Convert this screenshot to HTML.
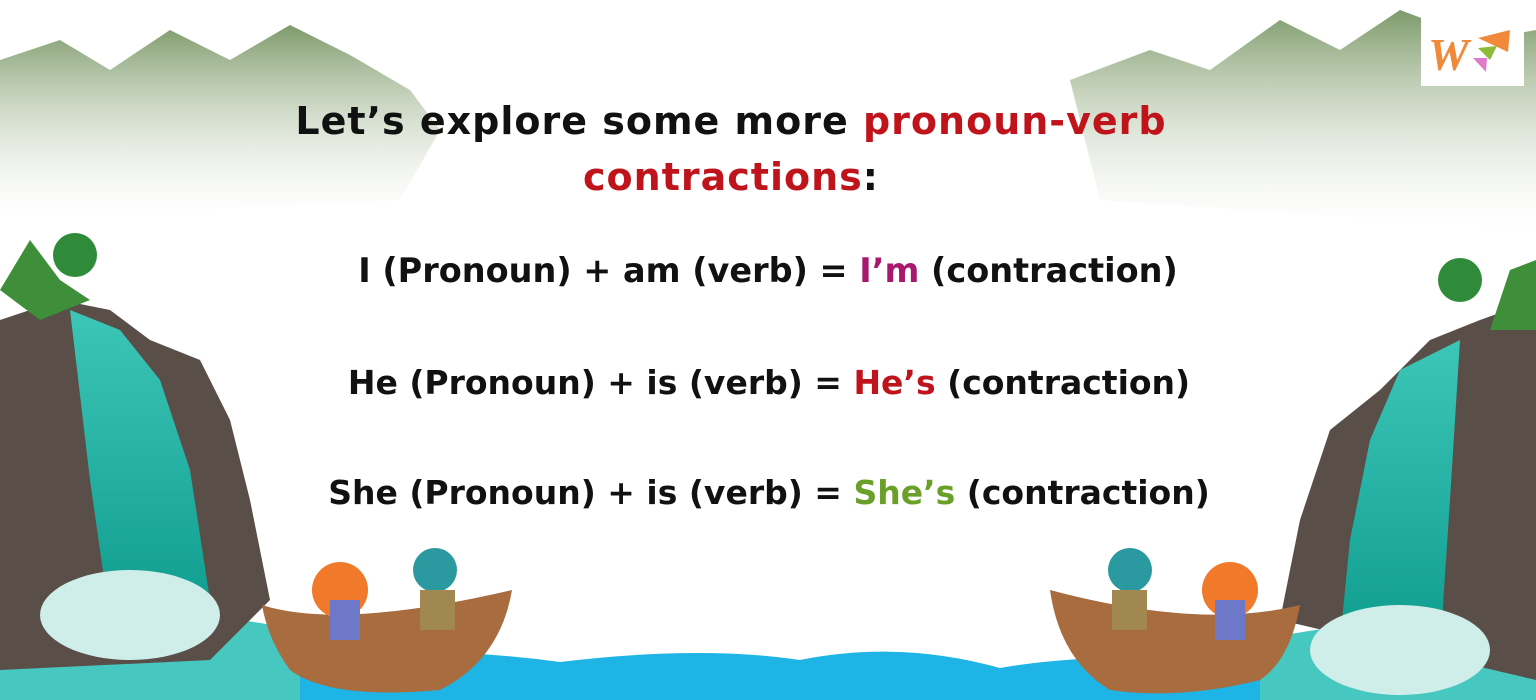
<!DOCTYPE html>
<html><head><meta charset="utf-8"><style>
html,body{margin:0;padding:0}
body{width:1536px;height:700px;position:relative;overflow:hidden;background:#fff;font-family:"DejaVu Sans","Liberation Sans",sans-serif;font-weight:bold}
svg{position:absolute;left:0;top:0}
.t{position:absolute;left:0;width:1536px;text-align:center;color:#111;white-space:nowrap}
.h{font-size:38px;letter-spacing:1px;left:-37px}
.l{font-size:33.5px}
.r{color:#c0141c}.m{color:#a8186e}.g{color:#6aa02a}
</style></head><body>
<svg width="1536" height="700" viewBox="0 0 1536 700">
<defs>
<linearGradient id="mt" x1="0" y1="0" x2="0" y2="1"><stop offset="0" stop-color="#7d9a6a"/><stop offset="1" stop-color="#e6ebe0" stop-opacity="0"/></linearGradient>
<linearGradient id="wf" x1="0" y1="0" x2="0" y2="1"><stop offset="0" stop-color="#3cc6b8"/><stop offset="1" stop-color="#0e9c8e"/></linearGradient>
</defs>
<path d="M0 60 L60 40 L110 70 L170 30 L230 60 L290 25 L350 55 L410 90 L440 130 L400 200 L0 220Z" fill="url(#mt)"/>
<path d="M1070 80 L1150 50 L1210 70 L1280 20 L1340 50 L1400 10 L1480 40 L1536 30 L1536 230 L1100 200Z" fill="url(#mt)"/>
<path d="M220 665 Q400 640 560 662 Q700 645 800 660 Q900 640 1000 668 Q1100 650 1300 660 L1300 700 L220 700Z" fill="#1eb4e6"/>
<path d="M0 620 Q150 600 300 630 L300 700 L0 700Z" fill="#46c8c0"/>
<path d="M1260 640 Q1400 610 1536 630 L1536 700 L1260 700Z" fill="#46c8c0"/>
<path d="M0 320 L60 300 L110 310 L150 340 L200 360 L230 420 L250 500 L270 600 L210 660 L0 670Z" fill="#5a4e48"/>
<path d="M70 310 L120 330 L160 380 L190 470 L210 600 L110 620 L90 480Z" fill="url(#wf)"/>
<ellipse cx="130" cy="615" rx="90" ry="45" fill="#cfeee9"/>
<path d="M0 290 L30 240 L60 280 L90 300 L40 320Z" fill="#3f8e3a"/>
<circle cx="75" cy="255" r="22" fill="#2f8a3a"/>
<path d="M1536 300 L1480 320 L1430 340 L1380 390 L1330 430 L1300 520 L1280 620 L1536 680Z" fill="#5a4e48"/>
<path d="M1460 340 L1400 370 L1370 440 L1350 540 L1340 640 L1440 650 L1450 500Z" fill="url(#wf)"/>
<ellipse cx="1400" cy="650" rx="90" ry="45" fill="#cfeee9"/>
<circle cx="1460" cy="280" r="22" fill="#2f8a3a"/>
<path d="M1490 330 L1510 270 L1536 260 L1536 330Z" fill="#3f8e3a"/>
<path d="M262 605 Q340 630 512 590 Q500 660 440 690 Q330 700 290 670 Q268 640 262 605Z" fill="#a86c3e"/>
<path d="M1050 590 Q1200 630 1300 605 Q1290 660 1260 680 Q1180 700 1110 690 Q1060 660 1050 590Z" fill="#a86c3e"/>
<circle cx="340" cy="590" r="28" fill="#f07a2a"/><rect x="330" y="600" width="30" height="40" fill="#6e78c8"/>
<circle cx="435" cy="570" r="22" fill="#2a9aa0"/><rect x="420" y="590" width="35" height="40" fill="#a08850"/>
<circle cx="1130" cy="570" r="22" fill="#2a9aa0"/><rect x="1112" y="590" width="35" height="40" fill="#a08850"/>
<circle cx="1230" cy="590" r="28" fill="#f07a2a"/><rect x="1215" y="600" width="30" height="40" fill="#6e78c8"/>
<rect x="1421" y="16" width="103" height="70" fill="#fff"/>
<text x="1428" y="70" font-family="Liberation Serif" font-style="italic" font-size="46" fill="#f08a3a">W</text>
<path d="M1478 38 L1510 30 L1508 52Z" fill="#f08a3a"/>
<path d="M1478 48 L1497 46 L1490 60Z" fill="#8cbb3a"/>
<path d="M1473 58 L1487 58 L1486 72Z" fill="#e07acc"/>
</svg>
<div class="t h" style="top:99px">Let’s explore some more <span class="r">pronoun-verb</span></div>
<div class="t h" style="top:155px"><span class="r">contractions</span>:</div>
<div class="t l" style="top:251px">I (Pronoun) + am (verb) = <span class="m">I’m</span> (contraction)</div>
<div class="t l" style="top:363px;left:1px;font-size:33px">He (Pronoun) + is (verb) = <span class="r">He’s</span> (contraction)</div>
<div class="t l" style="top:473px;left:1px;font-size:33px">She (Pronoun) + is (verb) = <span class="g">She’s</span> (contraction)</div>
</body></html>
